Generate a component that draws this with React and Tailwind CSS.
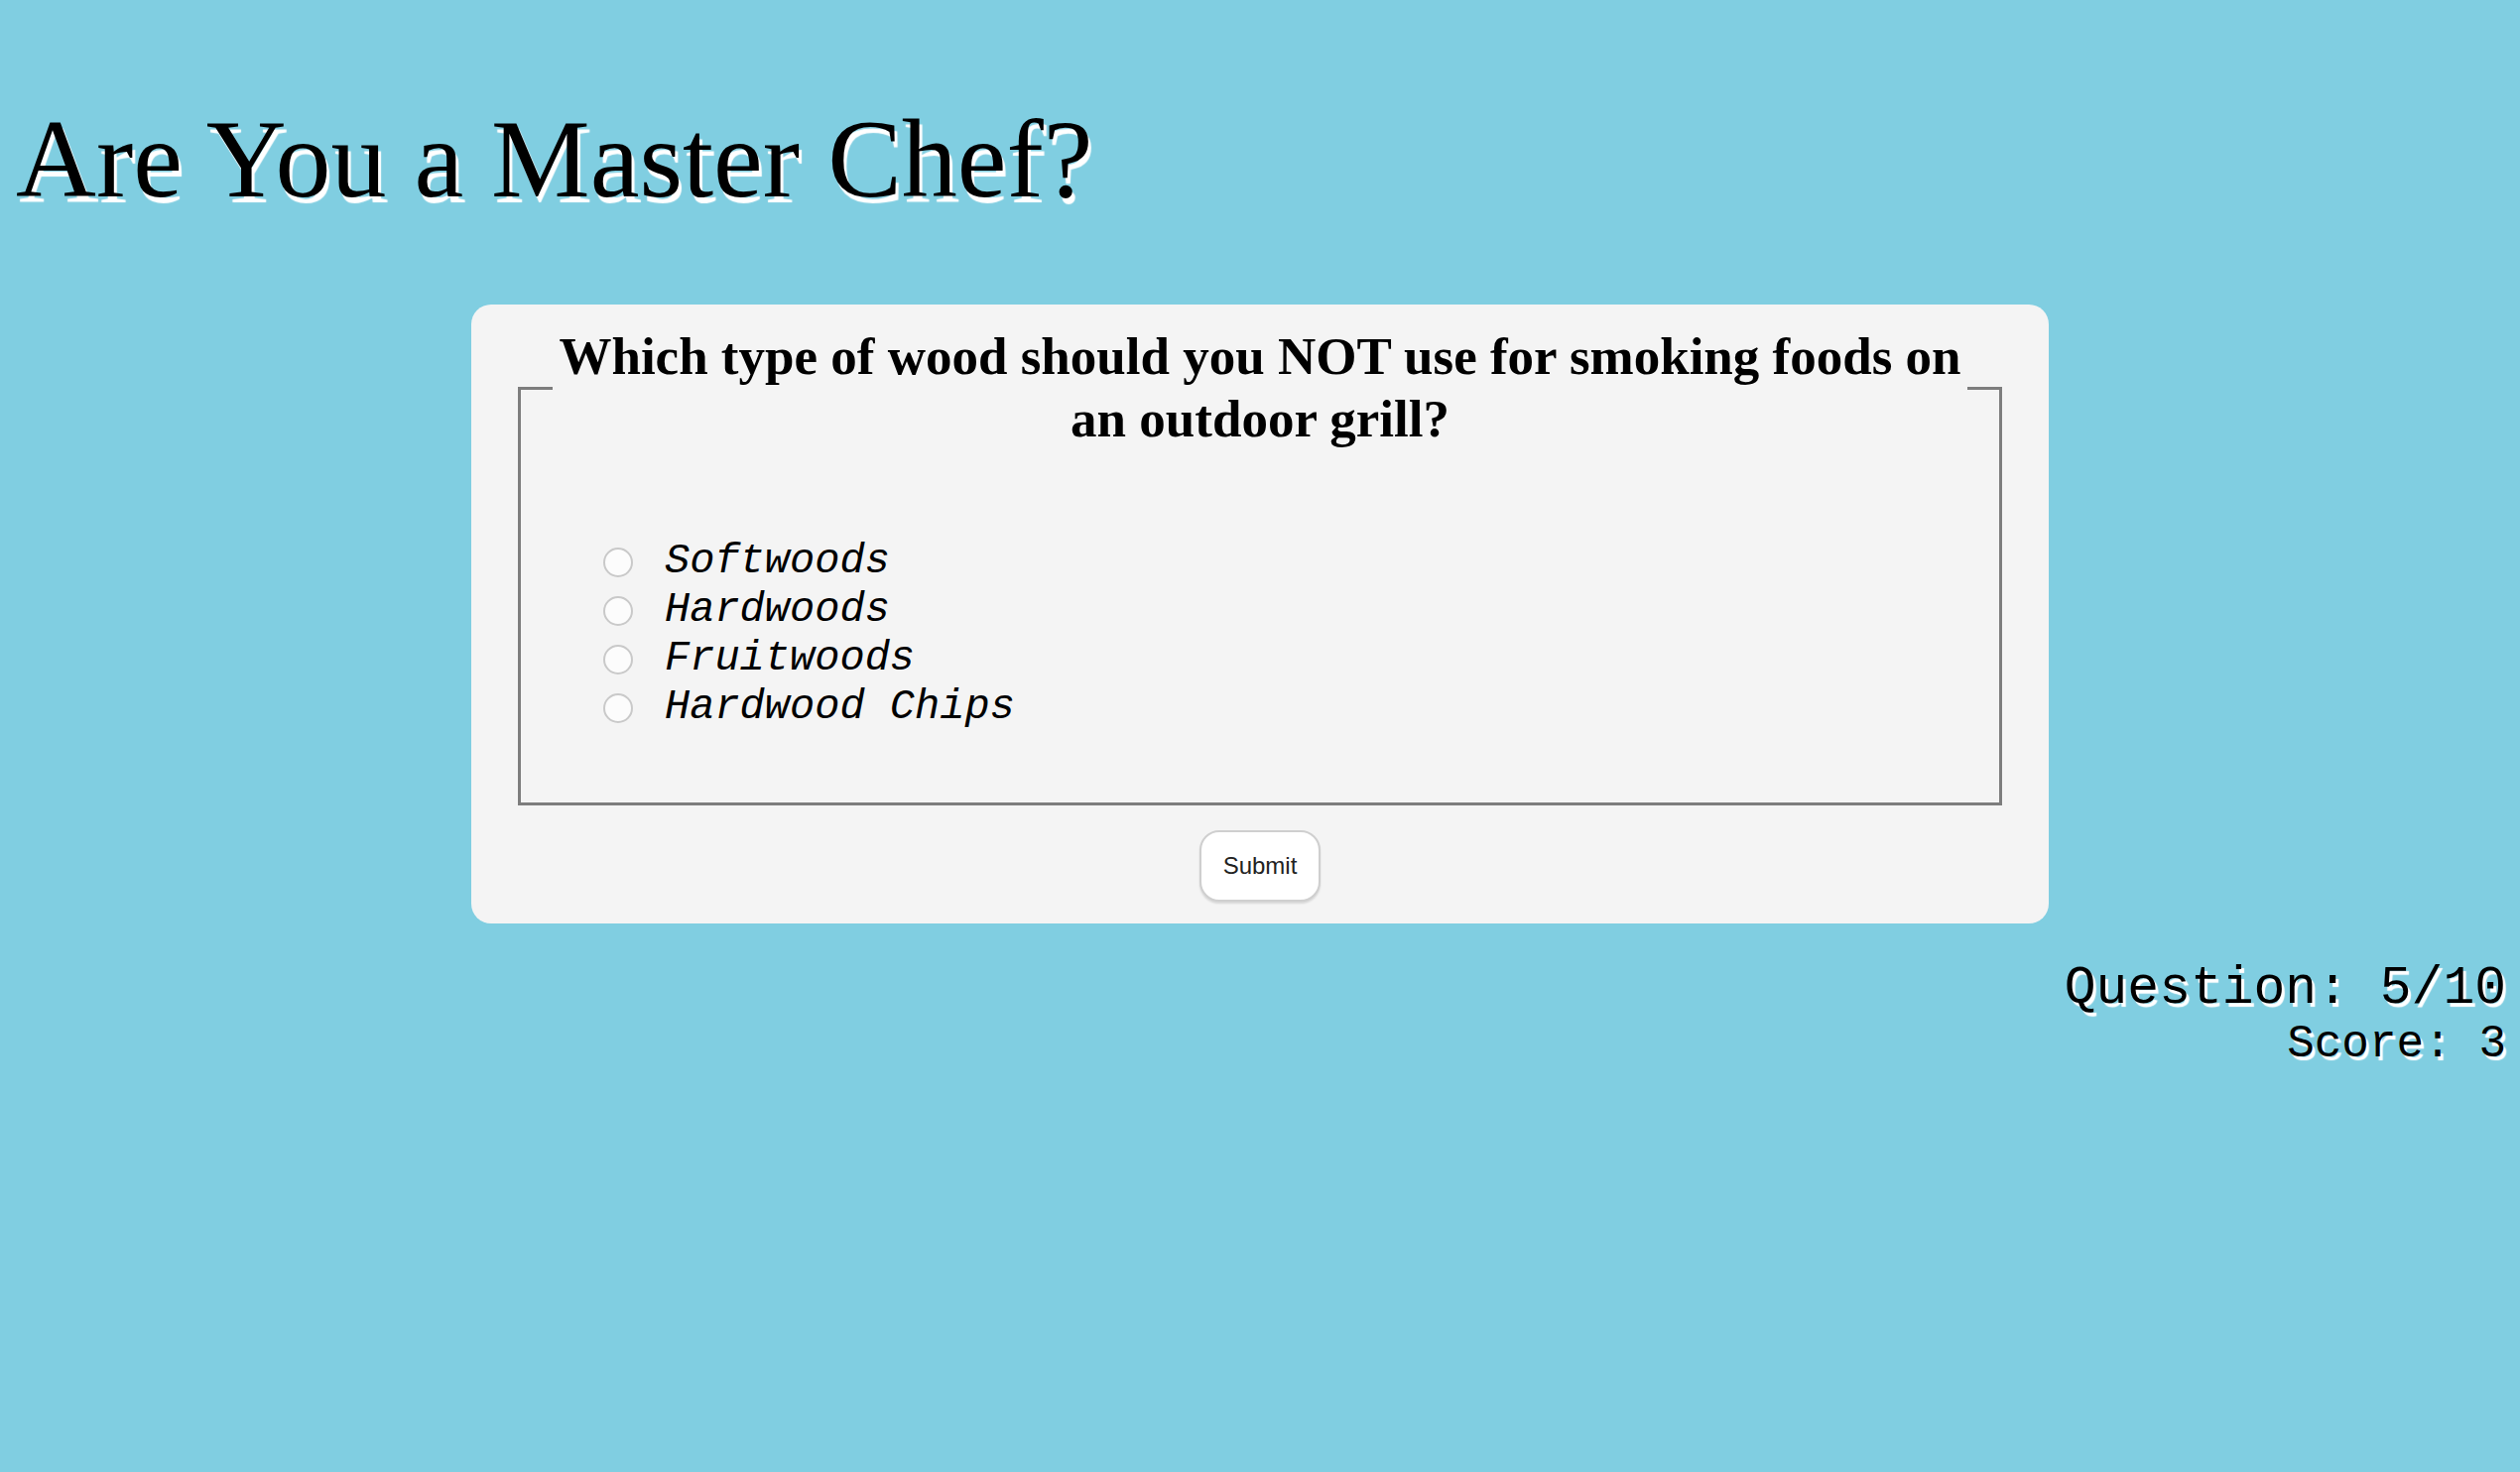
import React, { useState } from "react";

const options = ["Softwoods", "Hardwoods", "Fruitwoods", "Hardwood Chips"];

const App = () => {
  const [picked, setPicked] = useState(null);

  return (
    <div className="min-h-screen bg-[#80cee1] pt-[98px] font-['Liberation_Serif',serif] text-black">
      <h1 className="pl-[16px] text-[112px] leading-[124px] font-normal [text-shadow:3px_6px_1px_#fff]">
        Are You a Master Chef?
      </h1>

      {/* quiz card */}
      <div className="mx-auto mt-[85px] flex w-[1590px] flex-col items-center rounded-[20px] bg-[#f4f4f4] px-[47px] pt-[21px] pb-[22px]">
        <fieldset className="w-full border-[3px] border-[#7d7d7d] px-[25px] pt-[88px] pb-[71px]">
          <legend className="mx-auto px-[6px] text-center text-[53px] leading-[63px] font-bold">
            Which type of wood should you NOT use for smoking foods on
            <br />
            an outdoor grill?
          </legend>
          <div className="flex flex-col pl-[58px]">
            {options.map((opt) => (
              <label
                key={opt}
                className="flex h-[49px] cursor-pointer items-center font-['Liberation_Mono',monospace] text-[42px] italic"
              >
                <input
                  type="radio"
                  name="answer"
                  checked={picked === opt}
                  onChange={() => setPicked(opt)}
                  className="mr-[32px] h-[30px] w-[30px] shrink-0 appearance-none rounded-full border-2 border-[#c9c9c9] bg-[#fcfcfc] checked:border-[9px] checked:border-[#1a73e8]"
                />
                <span>{opt}</span>
              </label>
            ))}
          </div>
        </fieldset>
        <button className="mt-[25px] h-[72px] w-[122px] rounded-[20px] border-2 border-[#cfcfcf] bg-white font-['Liberation_Sans',Arial,sans-serif] text-[24px] text-[#222] shadow-[0_2px_2px_rgba(0,0,0,0.12)]">
          Submit
        </button>
      </div>

      <div className="mt-[38px] pr-[14px] text-right font-['Liberation_Mono',monospace] [text-shadow:3px_4px_1px_#fff]">
        <div className="text-[53px] leading-[56px]">Question: 5/10</div>
        <div className="text-[46px] leading-[56px]">Score: 3</div>
      </div>
    </div>
  );
};

export default App;
